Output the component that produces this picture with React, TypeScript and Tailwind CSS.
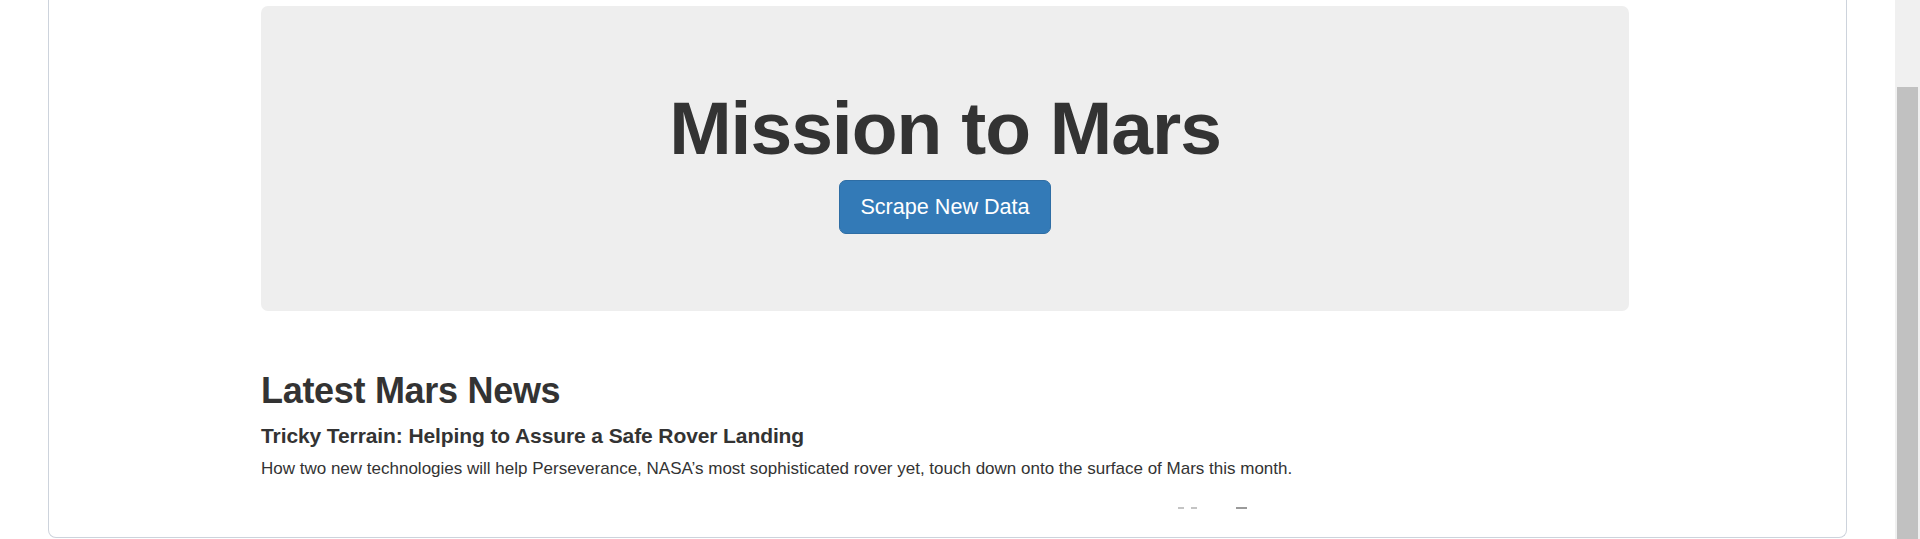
import { ReactNode } from "react";

function Jumbotron({ children }: { children: ReactNode }) {
  return (
    <div className="ml-[212px] mt-[6px] w-[1368px] rounded-[7px] bg-[#eeeeee] pt-[81px] pb-[77px] flex flex-col items-center">
      {children}
    </div>
  );
}

function News() {
  return (
    <div className="ml-[212px] mt-[60px] text-[#333333]">
      <h2 className="text-[36px] leading-[40px] font-bold tracking-[-0.3px]">Latest Mars News</h2>
      <h4 className="mt-[13px] text-[21px] leading-[24px] font-bold tracking-[-0.1px]">
        Tricky Terrain: Helping to Assure a Safe Rover Landing
      </h4>
      <p className="mt-[9px] text-[17px] leading-[24px]">
        How two new technologies will help Perseverance, NASA’s most sophisticated rover yet, touch down onto the surface of Mars this month.
      </p>
      <div className="mt-[26px] ml-[917px] flex items-start h-[3px]">
        <span className="w-[6px] h-[2px] bg-[#c4c4c4]" />
        <span className="ml-[7px] w-[6px] h-[2px] bg-[#c4c4c4]" />
        <span className="ml-[39px] w-[11px] h-[2px] bg-[#9a9a9a]" />
      </div>
    </div>
  );
}

export default function App() {
  return (
    <div
      className="flex w-[1920px] h-[539px] overflow-hidden bg-white"
      style={{ fontFamily: '"Liberation Sans", Arial, Helvetica, sans-serif' }}
    >
      <div className="flex-1 px-[48px]">
        <div className="h-[538px] border border-t-0 border-[#cdd3dc] rounded-b-[8px] overflow-hidden">
          <Jumbotron>
            <h1 className="text-[75px] leading-[82px] font-bold tracking-[-1px] text-[#333333]">
              Mission to Mars
            </h1>
            <button className="mt-[11px] h-[54px] px-[20px] flex items-center rounded-[7px] border border-[#2e6da4] bg-[#337ab7] text-white text-[21.6px]">
              Scrape New Data
            </button>
          </Jumbotron>
          <News />
        </div>
      </div>
      <div className="w-[25px] h-full bg-[#f0f0f0] pl-[2px] pr-[2px] pt-[87px]">
        <div className="h-full bg-[#c1c1c1]" />
      </div>
    </div>
  );
}
